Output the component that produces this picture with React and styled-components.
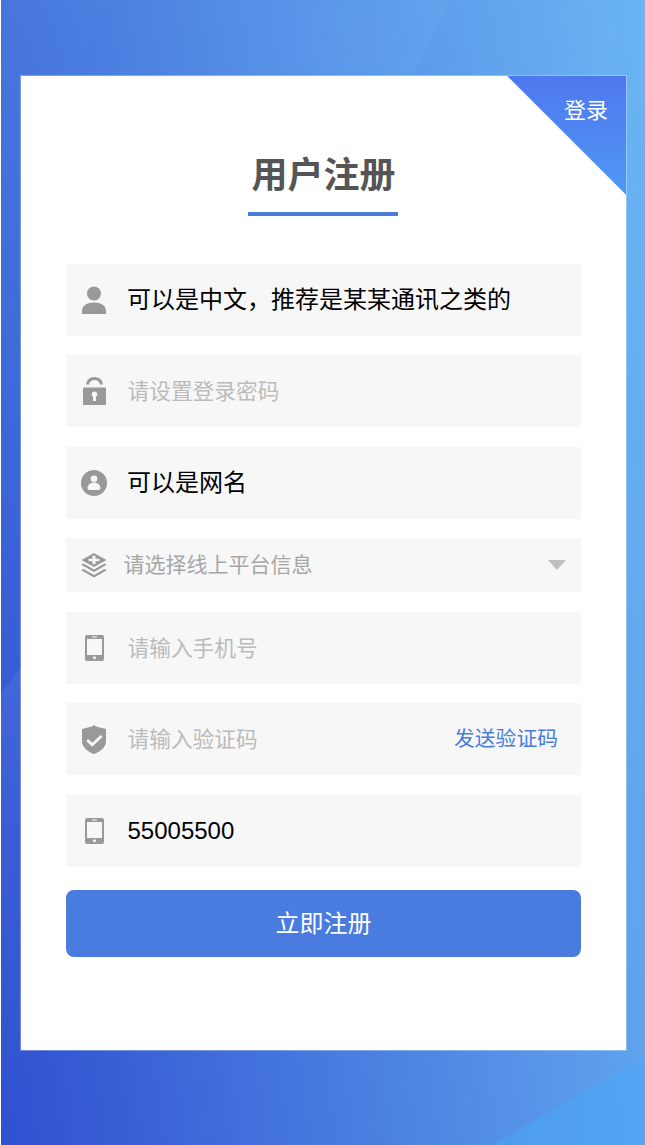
import React from 'react';
import styled, { createGlobalStyle } from 'styled-components';

const GlobalStyle = createGlobalStyle`
  html, body {
    margin: 0;
    padding: 0;
    background: #fff;
  }
  * {
    box-sizing: border-box;
  }
`

const Page = styled.div`
  width: 644px;
  height: 1145px;
  margin-left: 1px;
  padding: 74.7px 18px 94px 19px;
  font-family: "Liberation Sans", "Noto Sans CJK SC", sans-serif;
  background:
    linear-gradient(116.8deg, transparent 100px, rgba(120, 195, 250, .12) 402px, transparent 402px) 0 0 / 100% 80px no-repeat,
    linear-gradient(127.6deg, transparent 423px, rgba(255, 255, 255, .06) 423px, transparent 700px) 0 0 / 20px 100% no-repeat,
    linear-gradient(149.8deg, transparent 1237px, rgba(70, 170, 250, .45) 1237px),
    linear-gradient(150deg, rgba(110, 175, 240, .24), transparent 55%),
    linear-gradient(82deg, #2f50d0 0%, #6ab6f4 100%);
  overflow: hidden;
`

const Card = styled.main`
  position: relative;
  height: 976px;
  padding: 0 45px;
  background: #fff;
  border: 1px solid rgba(255, 255, 255, .3);
  background-clip: padding-box;
`

const Corner = styled.a`
  position: absolute;
  top: 0;
  right: 0;
  width: 119px;
  height: 119px;
  padding: 22px 18px 0 0;
  clip-path: polygon(0 0, 100% 0, 100% 100%);
  background: linear-gradient(to bottom, #4e78ee, #5098f4);
  color: #fff;
  font-size: 22px;
  line-height: 26px;
  text-align: right;
`

const Header = styled.header`
  display: flex;
  flex-direction: column;
  align-items: center;
  padding-top: 74px;
  margin-bottom: 48px;
`

const Title = styled.h1`
  margin: 0 0 10px;
  font-size: 36px;
  line-height: 52px;
  font-weight: 700;
  color: #555;
`

const Underline = styled.div`
  width: 150px;
  height: 4px;
  margin-left: -1px;
  background: #4a7dd9;
`

const Form = styled.form`
  display: flex;
  flex-direction: column;
  gap: 19.5px;
`

const Row = styled.div`
  display: flex;
  align-items: center;
  height: ${props => props.short ? 54 : 72}px;
  padding-right: 23px;
  background: #f7f7f7;
`

const IconBox = styled.span`
  display: flex;
  flex: none;
  align-items: center;
  justify-content: center;
  width: 56px;
  color: #999;
`

const Field = styled.input`
  flex: 1;
  min-width: 0;
  height: 100%;
  margin-left: ${props => props.raised ? 5 : 5.5}px;
  padding: 0 0 ${props => props.raised ? 4 : 0}px;
  border: 0;
  outline: 0;
  background: transparent;
  font-family: inherit;
  font-size: 24px;
  color: #000;

  &::placeholder {
    font-size: 21.7px;
    color: #bbb;
    opacity: 1;
  }
`

const SelectText = styled.span`
  flex: 1;
  margin-left: 1.500px;
  padding-bottom: 5px;
  font-size: 21px;
  color: #a6a6a6;
`

const Caret = styled.span`
  width: 0;
  height: 0;
  margin-right: -8px;
  border-left: 9.5px solid transparent;
  border-right: 9.5px solid transparent;
  border-top: 10px solid #bfbfbf;
`

const SendCode = styled.a`
  flex: none;
  padding-bottom: 4px;
  font-size: 20.8px;
  color: #4a7dd9;
`

const Submit = styled.button`
  height: 67px;
  margin-top: 3.5px;
  padding: 0 0 4px;
  border: 0;
  border-radius: 8px;
  background: #4a7ce0;
  color: #fff;
  font-family: inherit;
  font-size: 24px;
`

const UserIcon = () =>
  <svg width="26" height="28" viewBox="0 0 26 28" fill="currentColor">
    <circle cx="13" cy="7.5" r="7" />
    <path d="M1 28v-3c0-5.500 5-8.500 12-8.500s12 3 12 8.500v3z" />
  </svg>

const LockIcon = () =>
  <svg width="23" height="28" viewBox="0 0 23 28">
    <path d="M4.500 7.500a7 6 0 0 1 14 0" fill="none" stroke="currentColor" strokeWidth="3" />
    <path fill="currentColor" fillRule="evenodd" d="M1 10.500H22a1 1 0 0 1 1 1V27a1 1 0 0 1-1 1H1a1 1 0 0 1-1-1V11.500a1 1 0 0 1 1-1zM11.500 14.500a2.800 2.800 0 0 0-1.500 5.200V24h3v-4.300a2.800 2.800 0 0 0-1.500-5.200z" />
  </svg>

const ProfileIcon = () =>
  <svg width="26" height="26" viewBox="0 0 26 26" fill="currentColor">
    <path fillRule="evenodd" d="M13 0a13 13 0 1 1 0 26a13 13 0 0 1 0-26zM13 5.500a3.300 3.300 0 1 0 0 6.600a3.300 3.300 0 0 0 0-6.600zM13 12.500c-3.800 0-6.500 2.500-6.500 5.500c0 1.300.8 2 2 2h9c1.200 0 2-.7 2-2c0-3-2.700-5.500-6.500-5.500z" />
  </svg>

const LayersIcon = () =>
  <svg width="26" height="25" viewBox="0 0 26 25" fill="currentColor">
    <path fillRule="evenodd" d="M13 0l12.500 7L13 14 .5 7zM11.500 2.800v2.900H7.500v2.600h4v2.900h3V8.300h4V5.700h-4V2.800z" />
    <path d="M2.500 10.500L13 16.400l10.500-5.900 2.200 1.300L13 19 .3 11.800z" />
    <path d="M2.500 16L13 21.900l10.500-5.900 2.200 1.300L13 24.500.3 17.300z" />
  </svg>

const PhoneIcon = () =>
  <svg width="19" height="26" viewBox="0 0 19 26" fill="currentColor">
    <path fillRule="evenodd" d="M2 0h15a2 2 0 0 1 2 2v22a2 2 0 0 1-2 2H2a2 2 0 0 1-2-2V2a2 2 0 0 1 2-2zM2 4v16h15V4zM7 1.600v.9h5v-.9zM9.500 21.300a1.500 1.500 0 1 0 0 3a1.500 1.500 0 0 0 0-3z" />
  </svg>

const ShieldIcon = () =>
  <svg width="24" height="29" viewBox="0 0 24 29" fill="currentColor">
    <path fillRule="evenodd" d="M12 0l2 1.500 10 2.500v12c0 6-5 10.500-12 13C5 26.500 0 22 0 16V4l10-2.500zM18.500 10l-8.300 7.800-4-3.700-2 2 6 5.700 10.300-9.700z" />
  </svg>

const App = () =>
  <Page>
    <GlobalStyle />
    <Card>
      <Corner>登录</Corner>
      <Header>
        <Title>用户注册</Title>
        <Underline />
      </Header>
      <Form>
        <Row>
          <IconBox><UserIcon /></IconBox>
          <Field raised readOnly value="可以是中文，推荐是某某通讯之类的" />
        </Row>
        <Row>
          <IconBox><LockIcon /></IconBox>
          <Field readOnly placeholder="请设置登录密码" />
        </Row>
        <Row>
          <IconBox><ProfileIcon /></IconBox>
          <Field raised readOnly value="可以是网名" />
        </Row>
        <Row short>
          <IconBox><LayersIcon /></IconBox>
          <SelectText>请选择线上平台信息</SelectText>
          <Caret />
        </Row>
        <Row>
          <IconBox><PhoneIcon /></IconBox>
          <Field readOnly placeholder="请输入手机号" />
        </Row>
        <Row>
          <IconBox><ShieldIcon /></IconBox>
          <Field readOnly placeholder="请输入验证码" />
          <SendCode>发送验证码</SendCode>
        </Row>
        <Row>
          <IconBox><PhoneIcon /></IconBox>
          <Field readOnly value="55005500" />
        </Row>
        <Submit type="button">立即注册</Submit>
      </Form>
    </Card>
  </Page>

export default App;
